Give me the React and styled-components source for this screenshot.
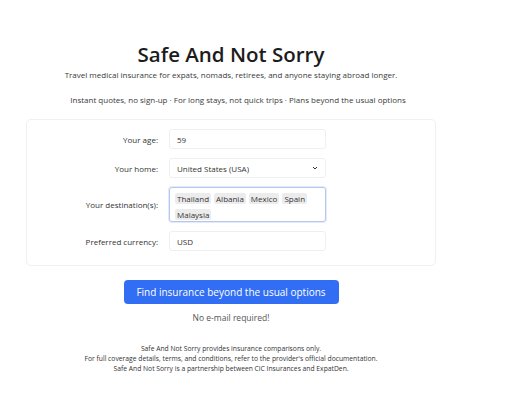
import styled, { createGlobalStyle } from "styled-components";

const GlobalStyle = createGlobalStyle`
    body {
        margin: 0;
        background: #fff;
        font-family: "Open Sans", "Liberation Sans", sans-serif;
        color: #222;
    }
`;

const Page = styled.div`
    width: 410px;
    margin-left: 26px;
    padding-top: 39px;
    text-align: center;
`;

const Title = styled.h1`
    margin: 0;
    font-size: 20.5px;
    line-height: 30px;
    font-weight: 600;
    color: #1c1c1c;
`;

const Tagline = styled.p`
    margin: ${({ $top }) => $top || 0}px -20px 0;
    padding-left: ${({ $shift }) => $shift || 0}px;
    font-size: 8px;
    line-height: 12px;
    color: #3a3a3a;
    white-space: nowrap;
`;

const Card = styled.div`
    margin-top: 13px;
    padding: 9px 0 14px;
    border: 1px solid #f0f0f0;
    border-radius: 5px;
    display: grid;
    grid-template-columns: 131px 157px;
    column-gap: 11px;
    row-gap: 9px;
    align-items: center;
    text-align: left;
`;

const Label = styled.label`
    font-size: 8px;
    color: #333;
    text-align: right;
`;

const Field = styled.div`
    box-sizing: border-box;
    height: 20px;
    padding: 0 7px;
    border: 1px solid #efefef;
    border-radius: 3px;
    display: flex;
    align-items: center;
    justify-content: space-between;
    font-size: 8px;
    color: #333;
`;

const TagBox = styled.div`
    box-sizing: border-box;
    height: 35px;
    padding: 5px 5px;
    border: 1px solid #b5c7ec;
    border-radius: 3px;
    box-shadow: 0 0 0 1px #e3eafa;
    display: flex;
    flex-wrap: wrap;
    align-content: flex-start;
    gap: 5px 3px;
`;

const Tag = styled.span`
    padding: 0 2px;
    height: 11px;
    line-height: 11px;
    background: #ececec;
    border-radius: 2px;
    font-size: 8px;
    color: #333;
`;

const Button = styled.button`
    margin-top: 14px;
    width: 215px;
    height: 24px;
    border: none;
    border-radius: 4px;
    background: #316ef3;
    color: #fff;
    font-family: inherit;
    font-size: 10px;
    cursor: pointer;
`;

const Note = styled.p`
    margin: 7px 0 0;
    font-size: 8.5px;
    line-height: 14px;
    color: #555;
`;

const Footer = styled.div`
    margin-top: 19px;
    font-size: 6.75px;
    line-height: 10px;
    color: #333;
`;

const Chevron = () => (
    <svg width="6" height="4" viewBox="0 0 6 4">
        <path d="M1 1 L3 3 L5 1" fill="none" stroke="#333" strokeWidth="1" />
    </svg>
);

const destinations = ["Thailand", "Albania", "Mexico", "Spain", "Malaysia"];

export default function App() {
    return (
        <>
            <GlobalStyle />
            <Page>
                <Title>Safe And Not Sorry</Title>
                <Tagline>Travel medical insurance for expats, nomads, retirees, and anyone staying abroad longer.</Tagline>
                <Tagline $top={13} $shift={14}>Instant quotes, no sign-up · For long stays, not quick trips · Plans beyond the usual options</Tagline>

                <Card>
                    <Label>Your age:</Label>
                    <Field>59</Field>

                    <Label>Your home:</Label>
                    <Field>
                        United States (USA)
                        <Chevron />
                    </Field>

                    <Label>Your destination(s):</Label>
                    <TagBox>
                        {destinations.map((d) => (
                            <Tag key={d}>{d}</Tag>
                        ))}
                    </TagBox>

                    <Label>Preferred currency:</Label>
                    <Field>USD</Field>
                </Card>

                <Button>Find insurance beyond the usual options</Button>
                <Note>No e-mail required!</Note>

                <Footer>
                    Safe And Not Sorry provides insurance comparisons only.<br />
                    For full coverage details, terms, and conditions, refer to the provider's official documentation.<br />
                    Safe And Not Sorry is a partnership between CiC Insurances and ExpatDen.
                </Footer>
            </Page>
        </>
    );
}
